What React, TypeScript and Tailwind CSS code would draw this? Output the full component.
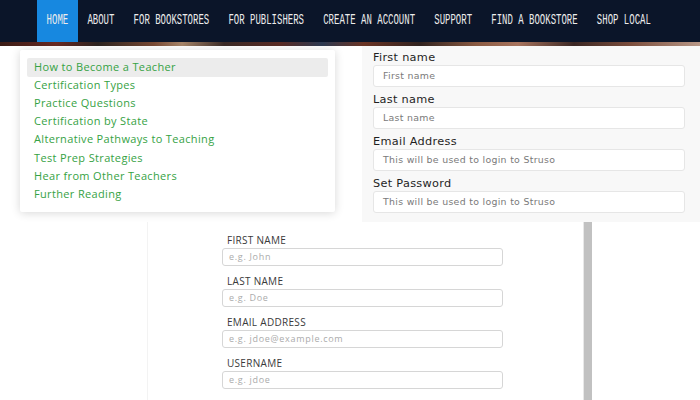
import React from "react";

const navItems = [
  "HOME",
  "ABOUT",
  "FOR BOOKSTORES",
  "FOR PUBLISHERS",
  "CREATE AN ACCOUNT",
  "SUPPORT",
  "FIND A BOOKSTORE",
  "SHOP LOCAL",
];

const menuLinks = [
  "How to Become a Teacher",
  "Certification Types",
  "Practice Questions",
  "Certification by State",
  "Alternative Pathways to Teaching",
  "Test Prep Strategies",
  "Hear from Other Teachers",
  "Further Reading",
];

const strusoFields = [
  { label: "First name", placeholder: "First name" },
  { label: "Last name", placeholder: "Last name" },
  { label: "Email Address", placeholder: "This will be used to login to Struso" },
  { label: "Set Password", placeholder: "This will be used to login to Struso" },
];

const signupFields = [
  { label: "FIRST NAME", placeholder: "e.g. John" },
  { label: "LAST NAME", placeholder: "e.g. Doe" },
  { label: "EMAIL ADDRESS", placeholder: "e.g. jdoe@example.com" },
  { label: "USERNAME", placeholder: "e.g. jdoe" },
];

export default function App() {
  return (
    <div className="w-[700px] h-[400px] overflow-hidden bg-white flex flex-col">
      {/* top nav */}
      <nav className="h-[42px] bg-[#0b1529] flex pl-[37px] shrink-0">
        {navItems.map((item, i) => (
          <div
            key={item}
            className={
              i === 0
                ? "h-full flex items-center px-[9.6px] bg-[#1788e0]"
                : "h-full flex items-center px-[9.6px]"
            }
          >
            <span className="inline-block scale-y-[1.55] text-[9px] leading-none text-[#ececec] whitespace-pre [font-family:'Liberation_Mono',monospace]">
              {item}
            </span>
          </div>
        ))}
      </nav>
      <div className="h-[4px] shrink-0 bg-[linear-gradient(90deg,#3a1c16_0%,#6a2a22_8%,#2b2320_14%,#7a4a34_22%,#a8866a_26%,#3a2a26_32%,#5b2b24_40%,#2d3a52_46%,#6b3424_52%,#30221f_60%,#8a5a42_68%,#a8745e_74%,#3b2724_82%,#7b4d3c_90%,#b89888_100%)]" />

      {/* upper collage row */}
      <div className="flex h-[176px] shrink-0">
        <div className="w-[362px] pl-[20px] pt-[4px] bg-white">
          <div className="w-[315px] h-[162px] bg-white shadow-[0_1px_10px_rgba(0,0,0,0.16)] rounded-[2px] px-[7px] pt-[8px]">
            <ul className="flex flex-col [font-family:'Open_Sans',sans-serif]">
              {menuLinks.map((link, i) => (
                <li
                  key={link}
                  className={
                    i === 0
                      ? "h-[19px] mb-[-1px] flex items-center pl-[7px] bg-[#ececec] rounded-[2px] text-[11px] tracking-[0.35px] text-[#36a244]"
                      : "h-[18.2px] flex items-center pl-[7px] text-[11px] tracking-[0.35px] text-[#36a244]"
                  }
                >
                  {link}
                </li>
              ))}
            </ul>
          </div>
        </div>
        <div className="flex-1 bg-[#f8f8f8] pl-[11px] pr-[15px] pt-[5px] [font-family:'DejaVu_Sans',sans-serif]">
          {strusoFields.map((f) => (
            <div key={f.label} className="mb-[6px]">
              <div className="text-[11.3px] leading-[14px] tracking-[0.3px] text-[#1f1f1f]">{f.label}</div>
              <div className="h-[22px] bg-white border border-[#e6e6e6] rounded-[3px] flex items-center pl-[9px] text-[9.4px] tracking-[0.3px] text-[#7a7a7a]">
                {f.placeholder}
              </div>
            </div>
          ))}
        </div>
      </div>

      {/* lower collage row */}
      <div className="flex flex-1">
        <div className="w-[148px] border-r border-[#f3f3f3]" />
        <div className="w-[435px] pl-[74px] pt-[11px] [font-family:'Open_Sans',sans-serif]">
          {signupFields.map((f) => (
            <div key={f.label} className="mb-[8px]">
              <div className="pl-[5px] text-[10px] leading-[14px] tracking-[0.3px] text-[#3a3a3a] mb-[1px]">{f.label}</div>
              <div className="w-[281px] h-[18px] border border-[#d6d6d6] rounded-[3px] flex items-center pl-[6px] text-[9px] tracking-[0.7px] text-[#ababab]">
                {f.placeholder}
              </div>
            </div>
          ))}
        </div>
        <div className="w-[9px] border-l border-[#e8e8e8] bg-[#c1c1c1]" />
        <div className="flex-1" />
      </div>
    </div>
  );
}
